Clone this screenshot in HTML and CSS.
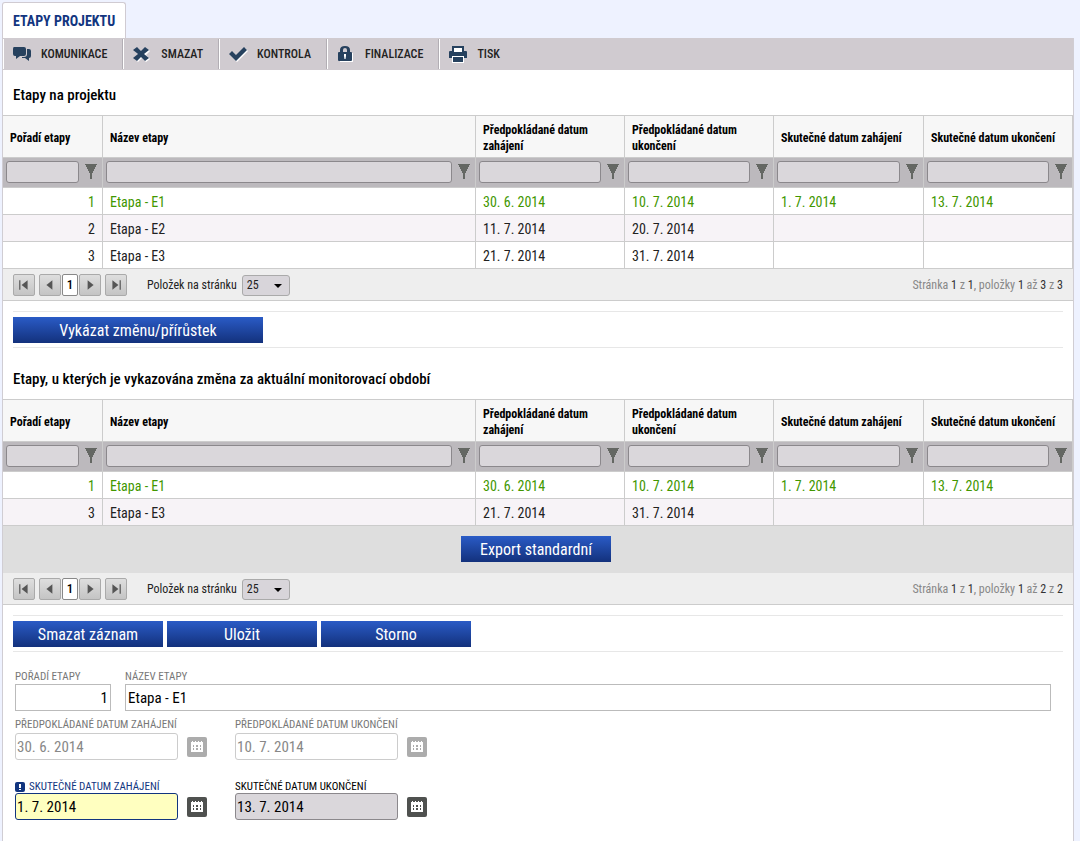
FILE: index.html
```html
<!DOCTYPE html>
<html lang="cs">
<head>
<meta charset="utf-8">
<title>Etapy projektu</title>
<link rel="stylesheet" href="styles.css">
</head>
<body>
<svg class="defs" aria-hidden="true">
  <symbol id="funnel" viewBox="0 0 13 16"><path d="M0 0h12v1h-1v2h-1v2H9v2H8v2H7v6H5V9H4V7H3V5H2V3H1V1H0z" fill="#646763"/></symbol>
  <symbol id="calendar" viewBox="0 0 20 20"><path d="M4 5h1V4h1v1h2V4h1v1h2V4h1v1h2V4h1v1h1v10H4z" fill="#fff"/><path d="M6 8h1v2H6zm3 0h2v2H9zm4 0h1v2h-1zM6 11h1v2H6zm3 0h2v2H9zm4 0h1v2h-1z" fill="currentColor"/></symbol>
</svg>
<nav class="tabs"><a class="tab" href="#etapy">ETAPY PROJEKTU</a></nav>
<main class="panel" id="etapy">
  <div class="toolbar">
    <button class="tool" type="button"><svg class="tool-icon" viewBox="0 0 20 20"><path d="M2 3h10q2 0 2 2v5q0 2-2 2H8l-4 3v-3H3q-2 0-2-2V5q0-2 1-2zM15 5h2q2 0 2 2v5q0 2-2 2v3l-4-3h-3v-1h2q3 0 3-3z" fill="#26415e"/></svg>KOMUNIKACE</button>
    <button class="tool" type="button"><svg class="tool-icon" viewBox="0 0 20 20"><path d="M6 4l4 4 4-4 4 3-4 4 4 4-4 3-4-4-4 4-3-3 4-4-4-4z" fill="#fff"/><path d="M5 3l4 4 4-4 4 3-5 4 5 4-4 3-4-4-4 4-4-3 5-4-5-4z" fill="#26415e"/></svg>SMAZAT</button>
    <button class="tool" type="button"><svg class="tool-icon" viewBox="0 0 20 20"><path d="M2 11l3-3 4 4 8-8 3 3L9 18z" fill="#fff"/><path d="M1 10l3-3 4 4 8-8 3 3L8 17z" fill="#26415e"/></svg>KONTROLA</button>
    <button class="tool" type="button"><svg class="tool-icon" viewBox="0 0 20 20"><path d="M4 9h13v9H4z" fill="#fff"/><path d="M4 8V6q0-4 5-4t5 4v2h1q1 0 1 1v7q0 1-1 1H3q-1 0-1-1V9q0-1 1-1zm3 0h4V6q0-2-2-2T7 6z" fill="#26415e"/><path d="M8 10h2v2l-.5 3h-1L8 12z" fill="#fff"/></svg>FINALIZACE</button>
    <button class="tool" type="button"><svg class="tool-icon" viewBox="0 0 20 20"><path d="M4 2h12v5H4zM2 7h16q1 0 1 1v6h-3v-2H4v2H1V8q0-1 1-1z" fill="#26415e"/><path d="M6 4h8v4H6zM4 12h12v7H4z" fill="#fff"/><path d="M5 13h10v5H5z" fill="#26415e"/></svg>TISK</button>
  </div>

  <h2 class="title">Etapy na projektu</h2>
  <table class="grid">
    <colgroup><col class="c-order"><col><col class="c-date"><col class="c-date"><col class="c-wide"><col class="c-date"></colgroup>
    <thead>
      <tr><th>Pořadí etapy</th><th>Název etapy</th><th>Předpokládané datum zahájení</th><th>Předpokládané datum ukončení</th><th>Skutečné datum zahájení</th><th>Skutečné datum ukončení</th></tr>
      <tr class="filters">
        <td><div class="filter"><input type="text" aria-label="Filtr: Pořadí etapy"><svg class="funnel"><use href="#funnel"/></svg></div></td>
        <td><div class="filter"><input type="text" aria-label="Filtr: Název etapy"><svg class="funnel"><use href="#funnel"/></svg></div></td>
        <td><div class="filter"><input type="text" aria-label="Filtr: Předpokládané datum zahájení"><svg class="funnel"><use href="#funnel"/></svg></div></td>
        <td><div class="filter"><input type="text" aria-label="Filtr: Předpokládané datum ukončení"><svg class="funnel"><use href="#funnel"/></svg></div></td>
        <td><div class="filter"><input type="text" aria-label="Filtr: Skutečné datum zahájení"><svg class="funnel"><use href="#funnel"/></svg></div></td>
        <td><div class="filter"><input type="text" aria-label="Filtr: Skutečné datum ukončení"><svg class="funnel"><use href="#funnel"/></svg></div></td>
      </tr>
    </thead>
    <tbody>
      <tr class="done"><td class="num">1</td><td>Etapa - E1</td><td>30. 6. 2014</td><td>10. 7. 2014</td><td>1. 7. 2014</td><td>13. 7. 2014</td></tr>
      <tr><td class="num">2</td><td>Etapa - E2</td><td>11. 7. 2014</td><td>20. 7. 2014</td><td></td><td></td></tr>
      <tr><td class="num">3</td><td>Etapa - E3</td><td>21. 7. 2014</td><td>31. 7. 2014</td><td></td><td></td></tr>
    </tbody>
  </table>
  <div class="pager">
    <div class="pages">
      <button class="page" type="button" aria-label="První stránka"><svg viewBox="0 0 10 10"><path d="M1 1h1v8H1zM8 1v8L3 5z"/></svg></button>
      <button class="page" type="button" aria-label="Předchozí stránka"><svg viewBox="0 0 10 10"><path d="M7 1v8L2 5z"/></svg></button>
      <button class="page current" type="button">1</button>
      <button class="page" type="button" aria-label="Další stránka"><svg viewBox="0 0 10 10"><path d="M3 1v8l5-4z"/></svg></button>
      <button class="page last" type="button" aria-label="Poslední stránka"><svg viewBox="0 0 10 10"><path d="M8 1h1v8H8zM2 1v8l5-4z"/></svg></button>
    </div>
    <label class="size-label" for="size1">Položek na stránku</label>
    <div class="size"><select id="size1"><option>25</option><option>50</option></select><svg class="arrow" viewBox="0 0 8 4"><path d="M0 0h8L4 4z"/></svg></div>
    <p class="summary">Stránka <b>1</b> z <b>1</b>, položky <b>1</b> až <b>3</b> z <b>3</b></p>
  </div>
  <div class="actions"><button class="btn large" type="button">Vykázat změnu/přírůstek</button></div>

  <h2 class="title second">Etapy, u kterých je vykazována změna za aktuální monitorovací období</h2>
  <table class="grid">
    <colgroup><col class="c-order"><col><col class="c-date"><col class="c-date"><col class="c-wide"><col class="c-date"></colgroup>
    <thead>
      <tr><th>Pořadí etapy</th><th>Název etapy</th><th>Předpokládané datum zahájení</th><th>Předpokládané datum ukončení</th><th>Skutečné datum zahájení</th><th>Skutečné datum ukončení</th></tr>
      <tr class="filters">
        <td><div class="filter"><input type="text" aria-label="Filtr: Pořadí etapy"><svg class="funnel"><use href="#funnel"/></svg></div></td>
        <td><div class="filter"><input type="text" aria-label="Filtr: Název etapy"><svg class="funnel"><use href="#funnel"/></svg></div></td>
        <td><div class="filter"><input type="text" aria-label="Filtr: Předpokládané datum zahájení"><svg class="funnel"><use href="#funnel"/></svg></div></td>
        <td><div class="filter"><input type="text" aria-label="Filtr: Předpokládané datum ukončení"><svg class="funnel"><use href="#funnel"/></svg></div></td>
        <td><div class="filter"><input type="text" aria-label="Filtr: Skutečné datum zahájení"><svg class="funnel"><use href="#funnel"/></svg></div></td>
        <td><div class="filter"><input type="text" aria-label="Filtr: Skutečné datum ukončení"><svg class="funnel"><use href="#funnel"/></svg></div></td>
      </tr>
    </thead>
    <tbody>
      <tr class="done"><td class="num">1</td><td>Etapa - E1</td><td>30. 6. 2014</td><td>10. 7. 2014</td><td>1. 7. 2014</td><td>13. 7. 2014</td></tr>
      <tr><td class="num">3</td><td>Etapa - E3</td><td>21. 7. 2014</td><td>31. 7. 2014</td><td></td><td></td></tr>
    </tbody>
  </table>
  <div class="export"><button class="btn" type="button">Export standardní</button></div>
  <div class="pager">
    <div class="pages">
      <button class="page" type="button" aria-label="První stránka"><svg viewBox="0 0 10 10"><path d="M1 1h1v8H1zM8 1v8L3 5z"/></svg></button>
      <button class="page" type="button" aria-label="Předchozí stránka"><svg viewBox="0 0 10 10"><path d="M7 1v8L2 5z"/></svg></button>
      <button class="page current" type="button">1</button>
      <button class="page" type="button" aria-label="Další stránka"><svg viewBox="0 0 10 10"><path d="M3 1v8l5-4z"/></svg></button>
      <button class="page last" type="button" aria-label="Poslední stránka"><svg viewBox="0 0 10 10"><path d="M8 1h1v8H8zM2 1v8l5-4z"/></svg></button>
    </div>
    <label class="size-label" for="size2">Položek na stránku</label>
    <div class="size"><select id="size2"><option>25</option><option>50</option></select><svg class="arrow" viewBox="0 0 8 4"><path d="M0 0h8L4 4z"/></svg></div>
    <p class="summary">Stránka <b>1</b> z <b>1</b>, položky <b>1</b> až <b>2</b> z <b>2</b></p>
  </div>
  <div class="actions">
    <button class="btn" type="button">Smazat záznam</button>
    <button class="btn" type="button">Uložit</button>
    <button class="btn" type="button">Storno</button>
  </div>

  <form class="form">
    <div class="row">
      <div class="field short"><label for="order">POŘADÍ ETAPY</label><input class="right" id="order" type="text" value="1"></div>
      <div class="field wide"><label for="name">NÁZEV ETAPY</label><input id="name" type="text" value="Etapa - E1"></div>
    </div>
    <div class="row dates muted">
      <div class="field date"><label for="plan-start">PŘEDPOKLÁDANÉ DATUM ZAHÁJENÍ</label><div class="control"><input id="plan-start" type="text" value="30. 6. 2014" readonly><button class="cal" type="button" aria-label="Kalendář"><svg><use href="#calendar"/></svg></button></div></div>
      <div class="field date"><label for="plan-end">PŘEDPOKLÁDANÉ DATUM UKONČENÍ</label><div class="control"><input id="plan-end" type="text" value="10. 7. 2014" readonly><button class="cal" type="button" aria-label="Kalendář"><svg><use href="#calendar"/></svg></button></div></div>
    </div>
    <div class="row dates actual">
      <div class="field date required"><label for="real-start"><svg class="alert" viewBox="0 0 10 10"><rect width="10" height="10" rx="2" fill="#12357f"/><path d="M4 2h2v4H4zm0 5h2v1H4z" fill="#fff"/></svg>SKUTEČNÉ DATUM ZAHÁJENÍ</label><div class="control"><input id="real-start" type="text" value="1. 7. 2014"><button class="cal" type="button" aria-label="Kalendář"><svg><use href="#calendar"/></svg></button></div></div>
      <div class="field date optional"><label for="real-end">SKUTEČNÉ DATUM UKONČENÍ</label><div class="control"><input id="real-end" type="text" value="13. 7. 2014"><button class="cal" type="button" aria-label="Kalendář"><svg><use href="#calendar"/></svg></button></div></div>
    </div>
  </form>
</main>
</body>
</html>
```
FILE: styles.css
```css
* { box-sizing: border-box; }
body {
  margin: 0;
  padding: 2px 6px 0 2px;
  min-height: 100vh;
  display: flex;
  flex-direction: column;
  background: #eef2ff;
  color: #222;
  font: 12px/16px "Roboto Condensed", "Liberation Sans Narrow", Roboto, sans-serif;
}
button, input, select { font: inherit; color: inherit; margin: 0; }
button { padding: 0; border: 0; cursor: pointer; }
svg { display: block; }
.defs { position: absolute; width: 0; height: 0; }

.tabs { display: flex; }
.tab {
  padding: 9px 10px 8px;
  border: 1px solid #d0cbd2;
  border-bottom: 0;
  border-radius: 3px 3px 0 0;
  background: #fff;
  color: #12357f;
  font-size: 14px;
  line-height: 18px;
  font-weight: 700;
  text-decoration: none;
}
.panel { flex: 1; background: #fff; border: solid #d0cdd3; border-width: 0 1px; }

.toolbar { display: flex; height: 32px; padding: 1px 0; background: #d0cbd0; }
.tool {
  display: flex;
  align-items: center;
  gap: 9px;
  padding: 0 15px 0 8px;
  border-right: 1px solid #b2aeb4;
  border-left: 1px solid #fff;
  background: none;
  color: #222;
  font-weight: 500;
}
.tool:last-child { border-right: 0; }
.tool-icon { width: 20px; height: 20px; }

.title { margin: 0; padding: 16px 10px 11px; color: #000; font-size: 15px; line-height: 18px; font-weight: 500; }
.second { padding-top: 22px; }

.grid { width: 100%; table-layout: fixed; border-collapse: separate; border-spacing: 0; border-top: 1px solid #ccc; }
.c-order { width: 100px; }
.c-date { width: 149px; }
.c-wide { width: 150px; }
.grid th, .grid td { padding: 6px 7px 4px; border: solid #ccc; border-width: 0 1px 1px 0; text-align: left; }
.grid th { height: 42px; padding: 6px 7px 3px; background: #f7f7f7; color: #000; font-weight: 700; }
.grid tbody td { height: 27px; font-size: 14px; }
.grid tbody tr:nth-child(even) { background: #f7f3f7; }
.grid .num { text-align: right; }
.grid .done { color: #429700; }
.grid .filters td { padding: 3px 4px 4px 3px; background: #bcb9bd; }
.filter { display: flex; gap: 6px; }
.filter input { flex: 1; min-width: 0; height: 22px; border: 1px solid #8b888c; border-radius: 3px; background: #dad7db; }
.funnel { width: 13px; height: 16px; margin-top: 3px; }

.pager { display: flex; align-items: center; padding: 5px 10px 4px; background: #eee; border-bottom: 1px solid #ccc; }
.pages { display: flex; gap: 1px; }
.page {
  display: grid;
  place-items: center;
  width: 22px;
  height: 22px;
  border: 1px solid #aaa;
  border-radius: 2px;
  background: linear-gradient(#dedede, #c4c4c4);
  fill: #555;
}
.page:first-child { margin-right: 3px; }
.page.last { margin-left: 3px; }
.page svg { width: 12px; height: 12px; }
.page.current { width: 16px; background: #fff; border-color: #888; color: #000; font-size: 13px; font-weight: 500; }
.size-label { margin: 0 5px 0 20px; }
.size { position: relative; }
.size select {
  appearance: none;
  display: block;
  width: 48px;
  height: 21px;
  padding: 0 4px;
  border: 1px solid #aaa;
  border-radius: 3px;
  background: #d8d5da;
}
.arrow { position: absolute; top: 9px; right: 8px; width: 8px; height: 4px; pointer-events: none; }
.summary { margin: 0 0 0 auto; color: #888; }
.summary b { color: #333; font-weight: 400; }

.actions { display: flex; gap: 4px; margin: 10px 10px 0; padding: 5px 0 4px; border: solid #e7e7e7; border-width: 1px 0; }
.btn {
  width: 150px;
  height: 26px;
  padding-top: 2px;
  background: linear-gradient(#2a5bc6, #13317c);
  color: #fff;
  font-size: 16px;
  line-height: 24px;
}
.large { width: 250px; }
.export { padding: 10px 4px 11px 0; background: #dedede; }
.export .btn { display: block; margin: 0 auto; }

.form { padding: 18px 22px 20px 12px; }
.row { display: flex; gap: 14px; }
.field { display: flex; flex-direction: column; font-size: 15px; color: #000; }
.field label { display: flex; align-items: center; gap: 4px; height: 14px; color: #777; font-size: 11px; font-weight: 400; }
.field input { width: 100%; height: 27px; padding: 0 2px; border: 1px solid #bbb; background: #fff; outline: 0; }
.short { width: 96px; }
.wide { flex: 1; }
.right { text-align: right; }
.dates { gap: 28px; margin-top: 6px; }
.date { width: 192px; }
.date label { height: 16px; }
.control { display: flex; align-items: center; gap: 9px; }
.control input { flex: 1; min-width: 0; padding: 0 1px; border-radius: 3px; }
.cal { width: 20px; height: 20px; border-radius: 2px; background: #4f514f; color: #4f514f; }
.cal svg { width: 20px; height: 20px; }
.muted input { border-color: #ccc; color: #888; }
.muted .cal { background: #acacac; color: #acacac; }
.actual { margin-top: 21px; }
.actual label { height: 12px; }
.required label { color: #12357f; }
.required input { border-color: #12357f; background: #ffffc0; }
.optional label { color: #000; }
.optional input { border-color: #8b888c; background: #dad7db; }
.alert { width: 10px; height: 10px; }
```
